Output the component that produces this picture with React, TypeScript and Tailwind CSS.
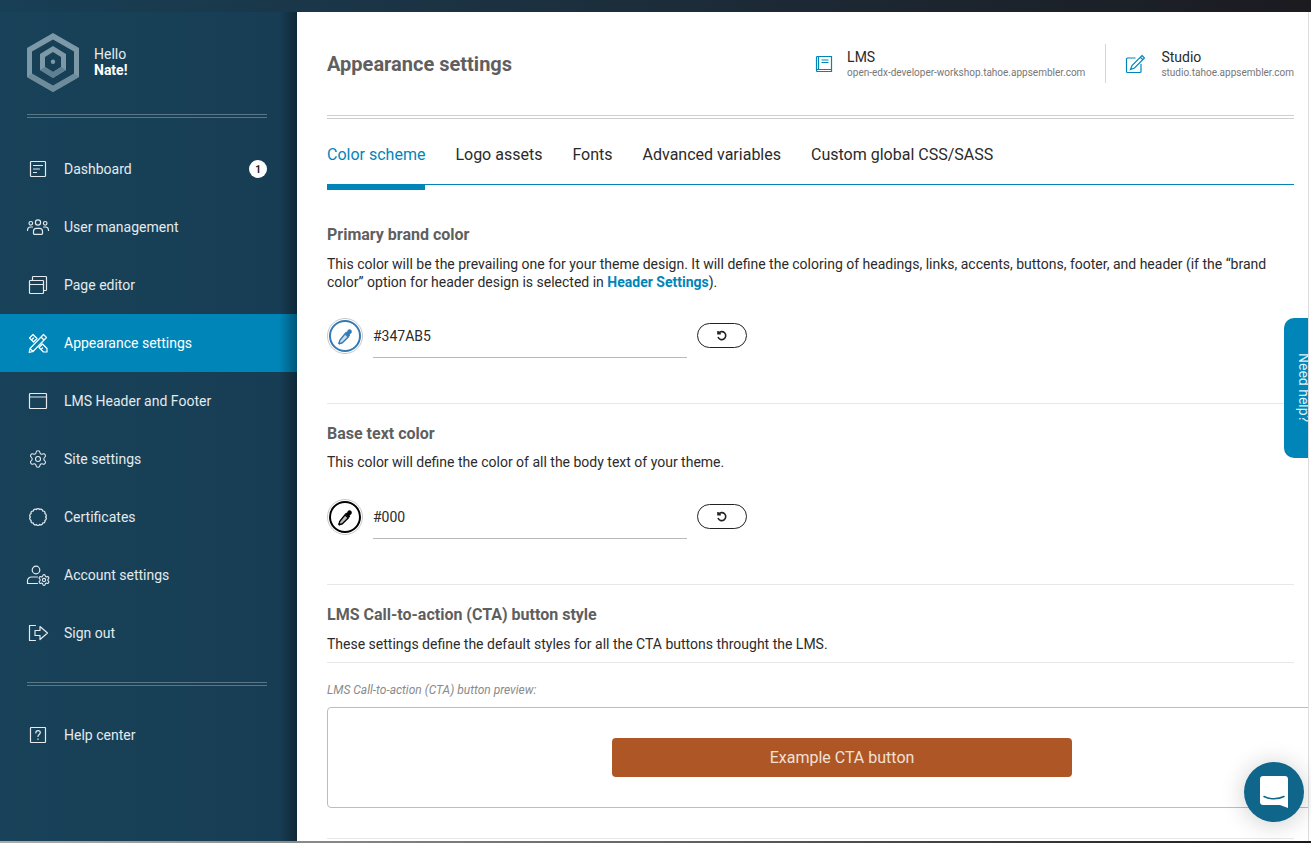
import type { ReactNode } from 'react'
import { Settings } from 'lucide-react'

const font = { fontFamily: 'Roboto, sans-serif' }

function Icon({ children, size = 24 }: { children: ReactNode; size?: number }) {
  return (
    <svg width={size} height={size} viewBox="0 0 24 24" fill="none" stroke="currentColor" strokeWidth="1.2" strokeLinejoin="round" strokeLinecap="round">
      {children}
    </svg>
  )
}

// scalloped seal outline for the certificates icon
function sealPath() {
  const count = 14
  const radius = 7.6
  let d = ''
  for (let i = 0; i <= count; i++) {
    const a = (i / count) * Math.PI * 2
    const x = (12 + radius * Math.cos(a)).toFixed(2)
    const y = (12 + radius * Math.sin(a)).toFixed(2)
    d += i === 0 ? `M${x} ${y}` : `A1.9 1.9 0 0 1 ${x} ${y}`
  }
  return d + 'z'
}

const navItems: { label: string; icon: ReactNode; badge?: string; active?: boolean }[] = [
  {
    label: 'Dashboard',
    badge: '1',
    icon: <Icon><rect x="4.5" y="4.5" width="15" height="15" rx="0.8" /><path d="M7.5 8.5h9M7.5 12h6M7.5 15.5h3" /></Icon>,
  },
  {
    label: 'User management',
    icon: <Icon><circle cx="12" cy="7.5" r="2.6" /><circle cx="4.8" cy="8.3" r="1.8" /><circle cx="19.2" cy="8.3" r="1.8" /><path d="M7.5 18.5v-2.2c0-1.8 1.5-3 3-3h3c1.5 0 3 1.2 3 3v2.2c0 .5-.4.8-.8.8H8.300c-.4 0-.8-.3-.8-.8zM1.500 15.500c0-2 1.500-3.500 3.300-3.500h1.700M22.500 15.500c0-2-1.500-3.500-3.300-3.500h-1.700" /></Icon>,
  },
  {
    label: 'Page editor',
    icon: <Icon><rect x="3.500" y="7.500" width="14" height="13" rx="0.8" /><path d="M3.500 11.500h14M6.500 7.500V4.300c0-.4.400-.8.800-.8h12.400c.4 0 .8.400.8.800v12.400c0 .4-.4.800-.8.800h-2.200" /></Icon>,
  },
  {
    label: 'Appearance settings',
    active: true,
    icon: <Icon><path d="M17.500 3.500l3 3L7 20.500l-3.800.8.800-3.800zM15 6l3 3M4 17.500l3 3M3.500 7l3.500-3.500 4 4L7.500 11zM13 16.500l3.500-3.500 4.500 4.500V21h-3.500zM6 8.500l1.500-1.500M15 18.500l1.500-1.500" /></Icon>,
  },
  {
    label: 'LMS Header and Footer',
    icon: <Icon><rect x="3.500" y="4.500" width="17" height="15" rx="0.8" /><path d="M3.500 8h17" /></Icon>,
  },
  {
    label: 'Site settings',
    icon: <span className="flex h-[24px] w-[24px] items-center justify-center"><Settings size={20} strokeWidth={1.3} /></span>,
  },
  {
    label: 'Certificates',
    icon: <Icon><path d={sealPath()} /></Icon>,
  },
  {
    label: 'Account settings',
    icon: <Icon><circle cx="10" cy="7" r="3.800" /><path d="M1.500 20.500v-2.800c0-2.200 2-3.700 4-3.700h6M1.500 20.500h10" /><Settings x={11.500} y={10.500} width={13} height={13} strokeWidth={2} /></Icon>,
  },
  {
    label: 'Sign out',
    icon: <Icon><path d="M9.500 4.500H3.500v15h6M9 9.500h5V5.500l7.500 6.500-7.500 6.500v-4H9z" /></Icon>,
  },
]

function NavRow({ label, icon, badge, active }: { label: string; icon: ReactNode; badge?: string; active?: boolean }) {
  return (
    <div className={`flex h-[58px] items-center pl-[26px] pr-[30px] text-[14px] text-[#e4eaee] ${active ? 'bg-[#0085b8] text-white' : ''}`}>
      <span className="flex w-[38px] shrink-0">{icon}</span>
      <span className="flex-1">{label}</span>
      {badge && <span className="flex h-[18px] w-[18px] items-center justify-center rounded-full bg-white text-[10px] font-bold text-[#222]">{badge}</span>}
    </div>
  )
}

function DoubleRule({ className }: { className: string }) {
  return <div className={`h-[4px] border-y border-[#5b7786] ${className}`}></div>
}

function Logo() {
  return (
    <svg width="52" height="59" viewBox="0 0 52 59">
      <path d="M26 0L52 15v29L26 59 0 44V15z" fill="#7d99a8" />
      <path d="M0 44l5-3.500 21 12 21-12 5 3.500-26 15z" fill="#6d8b9b" />
      <path d="M26 6.500l21 12v22l-21 12-21-12v-22z" fill="#173f56" />
      <path d="M26 13l13 8v16l-13 8-13-8V21z" fill="#7d99a8" />
      <path d="M26 19l8 5v10l-8 5-8-5V24z" fill="#173f56" />
      <path d="M13 37l5-3 8 5 8-5 5 3-13 8z" fill="#5f8091" />
      <circle cx="26" cy="28.700" r="2.200" fill="#7d99a8" />
    </svg>
  )
}

function Sidebar() {
  return (
    <aside className="relative flex w-[297px] shrink-0 flex-col bg-gradient-to-r from-[#184259] to-[#173d54]">
      <div className="absolute inset-y-0 right-0 w-[18px] bg-gradient-to-r from-transparent to-black/35"></div>
      <div className="flex h-[102px] items-start px-[27px] pt-[21px]">
        <Logo />
        <div className="ml-[15px] mt-[13px] text-[14px] leading-[16px] text-[#e4eaee]">
          <div>Hello</div>
          <div className="font-bold text-white">Nate!</div>
        </div>
      </div>
      <DoubleRule className="mx-[27px] w-[240px]" />
      <nav className="mt-[22px]">
        {navItems.map((item) => (
          <NavRow key={item.label} {...item} />
        ))}
      </nav>
      <DoubleRule className="mx-[27px] mt-[20px] w-[240px]" />
      <div className="mt-[20px]">
        <NavRow
          label="Help center"
          icon={<Icon><rect x="4.500" y="4.500" width="15" height="15" rx="0.500" /><path d="M9.800 10c0-1.400 1-2.300 2.300-2.300s2.200.9 2.200 2c0 1.700-2.300 1.800-2.300 3.700M12 15.800v.6" /></Icon>}
        />
      </div>
    </aside>
  )
}

function Dropper({ color }: { color: string }) {
  return (
    <svg width="17" height="17" viewBox="0 0 16 16">
      <path d="M10.200 1.800c.9-.9 2.300-.9 3.100 0 .9.900.9 2.200 0 3.100l-1.500 1.500.6.700-1.300 1.300-3.700-3.700 1.300-1.300.6.600z" fill={color} />
      <path d="M7.600 5.400l3 3-5.300 5.300c-.6.600-1.300.7-2 .6l-1 .7-.7-.7.700-1c-.1-.7 0-1.400.6-2z" fill={color} fillOpacity="0.25" stroke={color} strokeWidth="1.300" />
    </svg>
  )
}

function ColorField({ color, value }: { color: string; value: string }) {
  return (
    <div className="flex items-start">
      <div className="flex h-[36px] w-[36px] items-center justify-center rounded-full border border-[#c9c9c9]">
        <div className="flex h-[32px] w-[32px] items-center justify-center rounded-full border-2" style={{ borderColor: color }}>
          <Dropper color={color} />
        </div>
      </div>
      <div className="ml-[10px] h-[40px] w-[314px] border-b border-[#b8b8b8] pt-[9px] text-[14px] leading-[18px] text-[#2b2b2b]">{value}</div>
      <button className="ml-[10px] mt-[5px] flex h-[25px] w-[50px] items-center justify-center rounded-full border border-[#222] text-[#222]">
        <svg width="12" height="12" viewBox="0 0 12 12" fill="none" stroke="currentColor" strokeWidth="1.600">
          <path d="M2.400 3.400A4 4 0 1 1 2 7" />
          <path d="M2 1v2.800h2.800" />
        </svg>
      </button>
    </div>
  )
}

function Tab({ label, active }: { label: string; active?: boolean }) {
  return (
    <div className={`relative flex h-[65px] items-center pt-[7px] text-[16px] ${active ? 'text-[#0085b8]' : 'text-[#2a2a2a]'}`}>
      {label}
      {active && <span className="absolute inset-x-0 top-[65px] h-[6px] bg-[#0085b8]"></span>}
    </div>
  )
}

function Header() {
  return (
    <header className="flex h-[103px] items-center justify-between">
      <h1 className="text-[20px] font-bold text-[#5f5f5f]">Appearance settings</h1>
      <div className="flex items-center">
        <div className="flex items-center text-[#0085b8]">
          <svg width="20" height="20" viewBox="0 0 20 20" fill="none" stroke="currentColor" strokeWidth="1.200">
            <path d="M2.500 16.500V3.500c0-.6.400-1 1-1h14v15H3.500c-.6 0-1-.4-1-1zM4.500 2.500v13M2.500 16.500c0-.6.400-1 1-1h14M7.500 6h7M7.500 8.500h7" />
          </svg>
          <div className="ml-[13px] mr-[20px]">
            <div className="text-[14px] leading-[16px] text-[#2a2a2a]">LMS</div>
            <div className="mt-[2px] text-[10px] leading-[12px] text-[#777]">open-edx-developer-workshop.tahoe.appsembler.com</div>
          </div>
        </div>
        <div className="h-[39px] w-px bg-[#d6d6d6]"></div>
        <div className="ml-[19px] flex items-center text-[#0085b8]">
          <svg width="20" height="20" viewBox="0 0 20 20" fill="none" stroke="currentColor" strokeWidth="1.200">
            <path d="M10.500 4H2.500c-.6 0-1 .4-1 1v12.500c0 .6.400 1 1 1H15c.6 0 1-.4 1-1V10" />
            <path d="M17 1.500l2.500 2.500-10 10-4 1.500 1.500-4zM15.300 3.200l2.500 2.500" />
          </svg>
          <div className="ml-[16px]">
            <div className="text-[14px] leading-[16px] text-[#2a2a2a]">Studio</div>
            <div className="mt-[2px] text-[10px] leading-[12px] text-[#777]">studio.tahoe.appsembler.com</div>
          </div>
        </div>
      </div>
    </header>
  )
}

function Main() {
  return (
    <main className="relative h-full flex-1 overflow-hidden bg-white pl-[30px] pr-[14px]">
      <Header />
      <div className="h-[4px] border-y border-[#cfcfcf]"></div>
      <div className="flex gap-[30px] border-b border-[#0085b8]">
        <Tab label="Color scheme" active />
        <Tab label="Logo assets" />
        <Tab label="Fonts" />
        <Tab label="Advanced variables" />
        <Tab label="Custom global CSS/SASS" />
      </div>

      <section className="h-[219px] border-b border-[#e8e8e8] pt-[41px]">
        <h2 className="text-[16px] font-bold leading-[18px] text-[#5f5f5f]">Primary brand color</h2>
        <p className="mt-[11px] text-[14px] leading-[18px] text-[#2b2b2b]">
          This color will be the prevailing one for your theme design. It will define the coloring of headings, links, accents, buttons, footer, and header (if the “brand color” option for header design is selected in <a className="font-bold text-[#0085b8]">Header Settings</a>).
        </p>
        <div className="mt-[27px]"><ColorField color="#347ab5" value="#347AB5" /></div>
      </section>

      <section className="h-[181px] border-b border-[#e8e8e8] pt-[21px]">
        <h2 className="text-[16px] font-bold leading-[18px] text-[#5f5f5f]">Base text color</h2>
        <p className="mt-[10px] text-[14px] leading-[18px] text-[#2b2b2b]">This color will define the color of all the body text of your theme.</p>
        <div className="mt-[28px]"><ColorField color="#000000" value="#000" /></div>
      </section>

      <section className="pt-[21px]">
        <h2 className="text-[16px] font-bold leading-[18px] text-[#5f5f5f]">LMS Call-to-action (CTA) button style</h2>
        <p className="mt-[11px] border-b border-[#e8e8e8] pb-[9px] text-[14px] leading-[18px] text-[#2b2b2b]">These settings define the default styles for all the CTA buttons throught the LMS.</p>
        <p className="mt-[20px] text-[12px] italic leading-[14px] text-[#8a8a8a]">LMS Call-to-action (CTA) button preview:</p>
        <div className="mt-[10px] flex h-[101px] w-[1030px] items-center justify-center rounded-[4px] border border-[#bdbdbd]">
          <button className="h-[39px] w-[460px] rounded-[4px] bg-[#ae5626] text-[16px] text-[#f0e0d5]">Example CTA button</button>
        </div>
        <div className="mt-[30px] border-b border-[#e8e8e8]"></div>
      </section>

      <div className="absolute right-[-6px] top-[306px] flex h-[140px] w-[30px] items-center justify-center rounded-l-[10px] bg-[#0085b8] pl-[8px]">
        <span className="whitespace-nowrap text-[14px] text-[#dff1f8] [writing-mode:vertical-rl]">Need help?</span>
      </div>
    </main>
  )
}

export default function App() {
  return (
    <div className="relative flex h-[843px] w-[1311px] flex-col overflow-hidden bg-[#173f56]" style={font}>
      <div className="h-[12px] shrink-0 bg-gradient-to-r from-[#173f56] to-[#1b1b20]"></div>
      <div className="flex min-h-0 flex-1">
        <Sidebar />
        <div className="flex min-w-0 flex-1 bg-white">
          <Main />
          <div className="w-[3px] shrink-0 border-l border-[#dcdcdc] bg-white"></div>
        </div>
      </div>
      <div className="absolute inset-x-0 bottom-0 h-[2px] bg-gradient-to-r from-[#aaaaaa] via-[#666666] to-[#1a1a1a]"></div>
      <div className="absolute bottom-[21px] right-[7px] flex h-[60px] w-[60px] items-center justify-center rounded-full bg-[#10658a] shadow-[0_2px_24px_rgba(0,0,0,0.2)]">
        <svg width="28" height="32" viewBox="0 0 28 32">
          <path d="M3 0h22c1.700 0 3 1.300 3 3v29l-8-3H3c-1.700 0-3-1.300-3-3V3c0-1.700 1.300-3 3-3z" fill="#fff" />
          <path d="M4 20.500c5.500 3 14.500 3 20 0" fill="none" stroke="#10658a" strokeWidth="1.500" strokeLinecap="round" />
        </svg>
      </div>
    </div>
  )
}
